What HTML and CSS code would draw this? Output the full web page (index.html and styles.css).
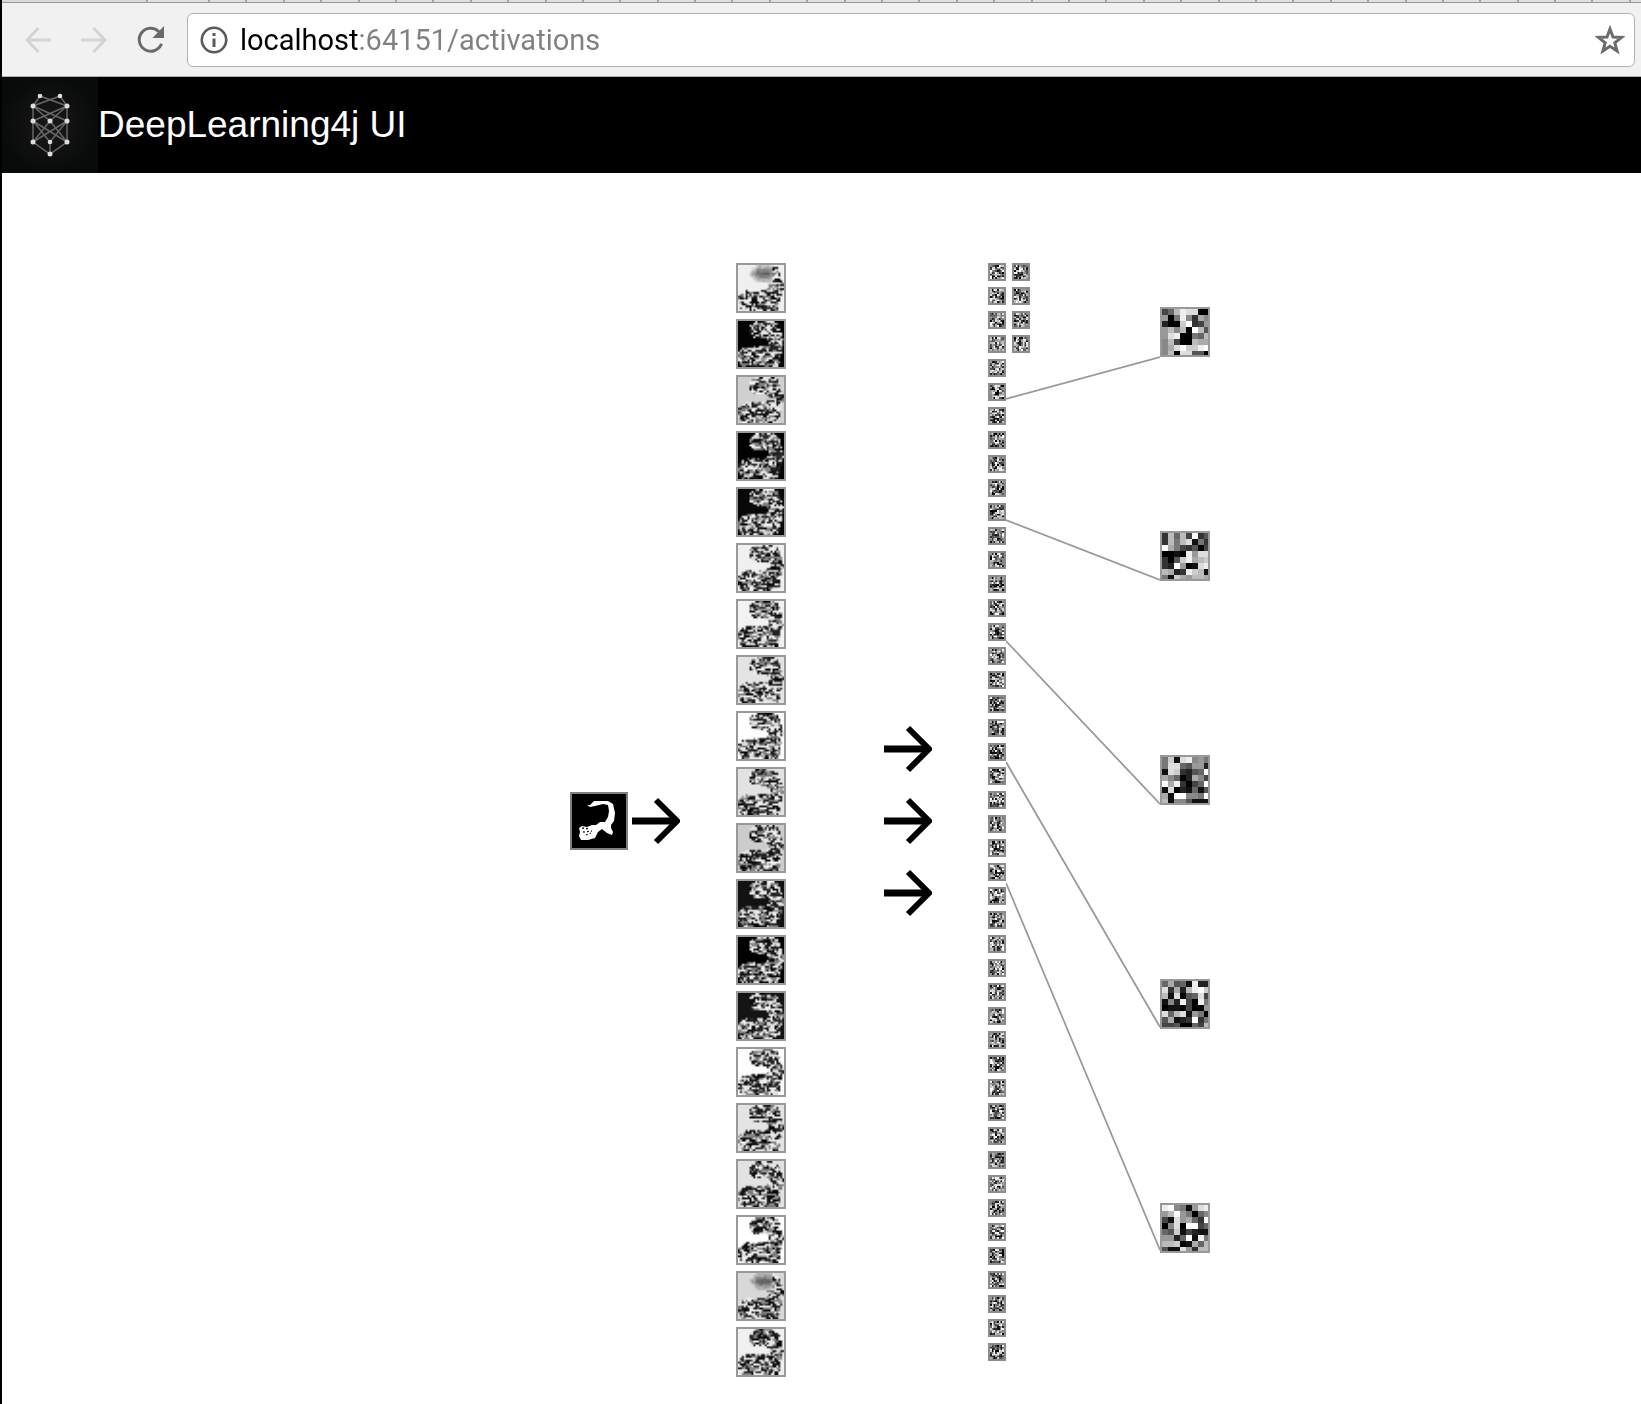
FILE: index.html
```html
<!DOCTYPE html>
<html lang="en">
<head>
<meta charset="utf-8">
<title>DeepLearning4j UI</title>
<link rel="stylesheet" href="styles.css">
</head>
<body>
<div class="window">
  <div class="tab-strip"><i class="tab-first"></i><i class="tab-second"></i><div class="tab-rest"><i></i><i></i><i></i><i></i><i></i><i></i><i></i><i></i><i></i><i></i><i></i><i></i><i></i><i></i><i></i><i></i><i></i><i></i><i></i><i></i><i></i><i></i><i></i><i></i><i></i><i></i><i></i><i></i><i></i><i></i><i></i><i></i><i></i><i></i><i></i><i></i><i></i><i></i></div></div>
  <nav class="toolbar" aria-label="Browser">
    <button class="tool" aria-label="Back" disabled><svg width="28" height="28" viewBox="0 0 28 28"><path d="M27 14H3M14.500 2L3 14l11.500 12" fill="none" stroke="#d3d3d3" stroke-width="3"/></svg></button>
    <button class="tool" aria-label="Forward" disabled><svg width="28" height="28" viewBox="0 0 28 28"><path d="M1 14h24M13.500 2L25 14 13.500 26" fill="none" stroke="#d3d3d3" stroke-width="3"/></svg></button>
    <button class="tool" aria-label="Reload"><svg width="28" height="28" viewBox="0 0 28 28"><path d="M25.500 17.800A11.500 11.500 0 1 1 23 5.700" fill="none" stroke="#6a6a6a" stroke-width="3"/><path d="M28 0v12H16.500z" fill="#6a6a6a"/></svg></button>
    <div class="address">
      <button class="site-info" aria-label="Site information"><svg width="28" height="28" viewBox="0 0 28 28"><circle cx="14" cy="14" r="12.200" fill="none" stroke="#5a5a5a" stroke-width="2.600"/><path d="M12.500 12.500h3V21h-3zM12.500 7h3v3h-3z" fill="#5a5a5a"/></svg></button>
      <input class="url" type="text" aria-label="Address" value="localhost:64151/activations">
      <button class="star" aria-label="Bookmark this page"><svg width="30" height="30" viewBox="0 0 30 30"><path d="M15 4l3 8 8.500.400-6.700 5.300 2.300 8.300L15 21.300 7.900 26l2.300-8.300L3.500 12.400 12 12z" fill="none" stroke="#6c6c6c" stroke-width="3"/></svg></button>
    </div>
  </nav>
  <header class="banner">
    <svg class="logo" width="96" height="96" viewBox="0 0 96 96" role="img" aria-label="Deeplearning4j logo">
      <defs><radialGradient id="glow"><stop offset="0" stop-color="#191919"/><stop offset="1" stop-color="#090a0a"/></radialGradient></defs>
      <path fill="url(#glow)" d="M0 0h96v96H0z"/>
      <path fill="none" stroke="#666" stroke-width="1.500" d="M38 19l-7 10v36l17 12 17-12V29l-7-10M38 19l27 10M58 19L31 29M31 29l34 15M65 29L31 44M31 29l17 15 17-15M31 44l17 21 17-21M31 44l34 21M65 44L31 65M48 44L31 65M48 44l17 21M48 65v12"/>
      <g fill="#ddd"><circle cx="38" cy="19" r="2.300"/><circle cx="58" cy="19" r="2.300"/><circle cx="31" cy="29" r="2.500"/><circle cx="65" cy="29" r="2.500"/><circle cx="31" cy="44" r="2.500"/><circle cx="48" cy="44" r="2.500"/><circle cx="65" cy="44" r="2.500"/><circle cx="31" cy="65" r="2.500"/><circle cx="48" cy="65" r="2.300"/><circle cx="65" cy="65" r="2.500"/><circle cx="48" cy="77" r="2.500"/></g>
    </svg>
    <h1 class="title">DeepLearning4j UI</h1>
  </header>
  <main class="content">
    <div class="network">
      <div class="source">
        <svg class="digit" width="58" height="58" viewBox="0 0 58 58" role="img" aria-label="Input digit">
          <path fill="#000" stroke="#808080" stroke-width="2" d="M1 1h56v56H1z"/>
          <path fill="#fff" d="M20 13l4-4h14l5 3 2 9-1 8-3 4v3l2 4-1 3-5-2-5-4-4 3-3 6-7 2H11l-2-4 1-4-1-4 3-2 5 1 5-2h4l4-3h5l3-5 1-6-1-6-5-1-8 2-5 1-3-2z"/>
          <path fill="none" stroke="#222" stroke-width="1.300" stroke-dasharray="2 2" d="M12 36l8 1M13 40l9-1M16 43l5-2"/>
        </svg>
        <svg width="48" height="48" viewBox="0 0 48 48"><path class="arrow" d="M0 24h45"/><path class="arrow-head" d="M24 3l21 21-21 21"/></svg>
      </div>
      <div class="maps" id="maps"></div>
      <div class="flow">
        <svg width="48" height="48" viewBox="0 0 48 48"><path class="arrow" d="M0 24h45"/><path class="arrow-head" d="M24 3l21 21-21 21"/></svg>
        <svg width="48" height="48" viewBox="0 0 48 48"><path class="arrow" d="M0 24h45"/><path class="arrow-head" d="M24 3l21 21-21 21"/></svg>
        <svg width="48" height="48" viewBox="0 0 48 48"><path class="arrow" d="M0 24h45"/><path class="arrow-head" d="M24 3l21 21-21 21"/></svg>
      </div>
      <div class="kernels" id="kernels"></div>
      <div class="filters" id="filters">
        <svg class="links" width="154" height="1114" viewBox="0 0 154 1114"><path fill="none" stroke="#999" stroke-width="1.800" d="M0 136L154 94M0 257l154 60M0 378l154 163M0 499l154 265M0 620l154 367"/></svg>
      </div>
    </div>
  </main>
</div>
<script src="draw.js"></script>
</body>
</html>
```
FILE: styles.css
```css
* { box-sizing: border-box; }
body { margin: 0; background: #fff; font-family: "Liberation Sans", Arial, sans-serif; }
button { display: flex; align-items: center; justify-content: center; margin: 0; padding: 0; border: 0; background: none; }
svg { display: block; flex: none; }

.window { min-height: 100vh; border-left: 2px solid #000; }

.tab-strip { display: flex; height: 3px; background: #e0e0e0; border-bottom: 1px solid #999; }
.tab-strip i { border-right: 2px solid #a6a6a6; }
.tab-first { width: 146px; background: #d9d9d9; }
.tab-second { width: 62px; }
.tab-rest { display: flex; flex: 1; padding-right: 10px; }
.tab-rest i { flex: 1; }

.toolbar { display: flex; align-items: center; height: 74px; padding: 0 6px 0 22px; background: #f1f1f1; border-bottom: 1px solid #b0aeb0; }
.tool { width: 28px; height: 28px; margin-right: 28px; }
.address { display: flex; flex: 1; align-items: center; height: 54px; margin-left: -5px; padding: 0 9px 0 12px; background: #fff; border: 1px solid #b3b3b3; border-radius: 6px; }
.url { flex: 1; min-width: 0; height: 40px; margin-left: 12px; padding: 0; border: 0; outline: 0; font: 29px/40px Roboto, sans-serif; color: transparent; background: linear-gradient(90deg, #000 120px, #808080 120px); -webkit-background-clip: text; background-clip: text; }

.banner { display: flex; align-items: center; height: 96px; background: #000; }
.title { margin: 0; color: #fff; font-size: 37px; font-weight: 400; line-height: 44px; }

.content { display: flex; justify-content: center; padding: 90px 0 26px 137px; }
.network { display: flex; }
.source { display: flex; align-items: center; gap: 4px; padding-top: 2px; }
.arrow { fill: none; stroke: #000; stroke-width: 7; }
.arrow-head { fill: none; stroke: #000; stroke-width: 6; }
.maps { display: flex; flex-direction: column; gap: 6px; margin-left: 56px; }
.flow { display: flex; flex-direction: column; justify-content: center; gap: 24px; margin-left: 98px; padding-top: 2px; }
.kernels { display: grid; grid-template-rows: repeat(46, 18px); grid-auto-flow: column; align-content: start; gap: 6px; margin-left: 56px; }
.filters { position: relative; display: flex; flex-direction: column; gap: 174px; margin-left: 130px; padding-top: 44px; }
.links { position: absolute; top: 0; right: 100%; }
canvas { display: block; border: 2px solid #999; }
.map, .filter { width: 50px; height: 50px; }
.kernel { width: 18px; height: 18px; border-color: #8c8c8c; }
```
FILE: draw.js
```js
var seed = 7;
function random() {
  seed = (seed * 16807) % 2147483647;
  return seed / 2147483647;
}

function tile(parent, className, size) {
  var canvas = document.createElement('canvas');
  canvas.className = className;
  canvas.width = canvas.height = size;
  document.getElementById(parent).appendChild(canvas);
  return canvas.getContext('2d');
}

function fill(ctx, gray, x, y, w, h) {
  ctx.fillStyle = 'rgb(' + gray + ',' + gray + ',' + gray + ')';
  ctx.fillRect(x, y, w, h);
}

// Where the convolved digit is active, on a 24 by 24 grid
var activity = [
  '.........##########.....',
  '.......##############...',
  '......###############...',
  '......################..',
  '......################..',
  '......################..',
  '......#################.',
  '.......################.',
  '........###############.',
  '...............#########',
  '................########',
  '................########',
  '...............#########',
  '....#####.#############.',
  '..#####################.',
  '.######################.',
  '#######################.',
  '######################..',
  '######################..',
  '######################..',
  '######################..',
  '.#####################..',
  '.####################...',
  '..#########..########...'
];

var backgrounds = [240, 4, 208, 0, 8, 240, 242, 228, 255, 226, 204, 18, 0, 20, 254, 228, 226, 255, 216, 240];
backgrounds.forEach(function (background, index) {
  var ctx = tile('maps', 'map', 24);
  var soft = index === 0 || index === 18;
  fill(ctx, background, 0, 0, 24, 24);
  activity.forEach(function (row, y) {
    var previous = 0.5;
    for (var x = 0; x < 24; x++) {
      var level = random();
      var edge = random();
      if (edge < 0.3) level = previous;
      previous = level;
      if (row[x] !== '#') continue;
      var gray = level < 0.38 ? level * 120 : level < 0.65 ? 70 + level * 120 : 170 + level * 75;
      if (soft && y < 9 && x < 18) {
        var away = Math.abs(y - 4) * 22 + Math.max(0, Math.abs(x - 13) - 3) * 22;
        gray = Math.min(background, 75 + away + level * 45);
      }
      fill(ctx, Math.round(gray), x, y, 1, 1);
    }
  });
});

var filters = [
  ['46bedd00', '907e83a8', '200cf349', '9b8b0fb5', '9de0076b', '8b400baa', '8adfccef', '8b0dd550'],
  ['3b6b4f35', '3b7bd173', 'fa743504', '0010e9dd', '305ceabc', '32f901de', 'ba23ecb1', '71ca9bba'],
  ['7c1de897', '7dd65992', '1dc3256f', 'a8602a84', 'fae3046f', '1d021615', 'a1ff887f', 'b1885111'],
  ['6a561e22', 'd3a2befc', 'b1d056d4', '182e40e7', '01104009', 'd6bd1970', '5a123f37', '4450064b'],
  ['ef8719de', '9bf97068', '41d9a63f', '08d0ff46', '65c14211', '9926f1e7', 'bbc01a6b', '511d93bb']
];

function drawFilter(ctx, rows) {
  rows.forEach(function (row, y) {
    for (var x = 0; x < 8; x++) fill(ctx, parseInt(row[x], 16) * 17, x * 6, y * 6, 6, 6);
  });
}

filters.forEach(function (rows) {
  drawFilter(tile('filters', 'filter', 46), rows);
});

for (var k = 0; k < 50; k++) {
  var ctx = tile('kernels', 'kernel', 48);
  var rows = filters[k / 5 - 1];
  if (!rows || k % 5) {
    rows = [];
    for (var y = 0; y < 8; y++) {
      var row = '';
      for (var x = 0; x < 8; x++) row += Math.floor(random() * 16).toString(16);
      rows.push(row);
    }
  }
  drawFilter(ctx, rows);
}
```
